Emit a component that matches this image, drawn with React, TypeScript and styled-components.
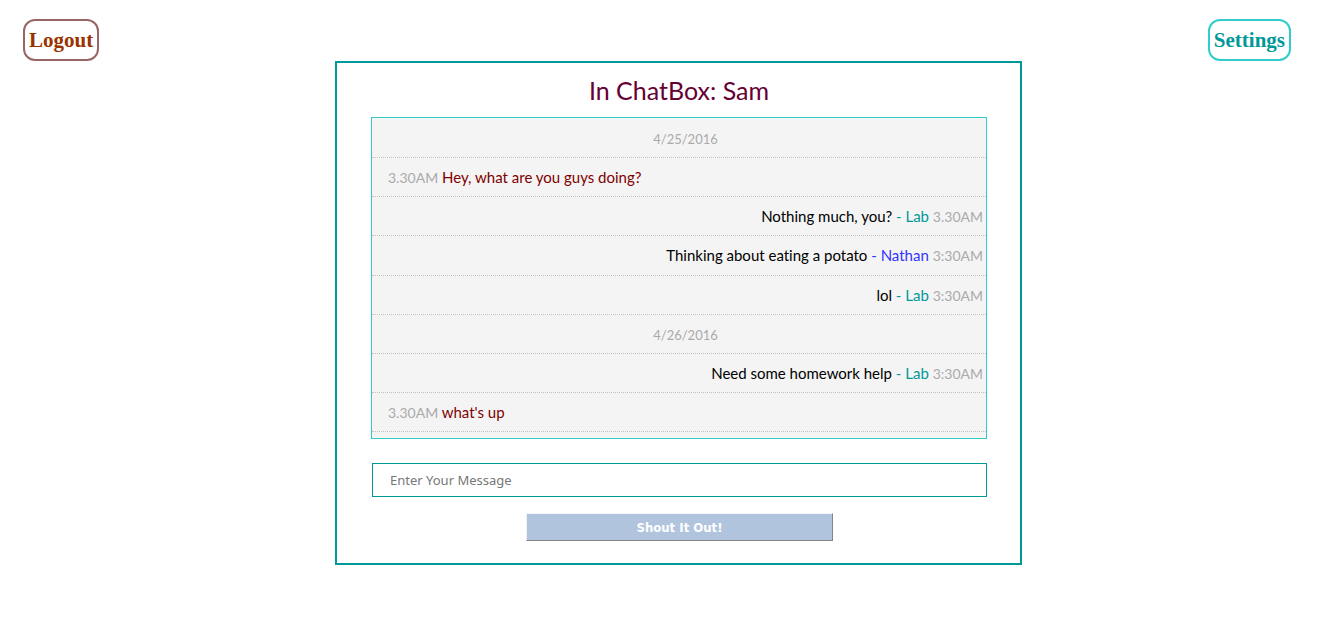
import React from "react";
import styled, { createGlobalStyle } from "styled-components";

const GlobalStyle = createGlobalStyle`
  *, *::before, *::after { box-sizing: border-box; }
  body { margin: 0; background: #fff; }
`;

const TopBar = styled.nav`
  display: flex;
  justify-content: space-between;
  padding: 19px 32px 0 23px;
`;

const PillLink = styled.a<{ $color: string; $border: string }>`
  padding: 0 4px;
  border: 2px solid ${(p) => p.$border};
  border-radius: 12px;
  color: ${(p) => p.$color};
  font: bold 21px/38px "Times New Roman", "Liberation Serif", serif;
  text-decoration: none;
`;

const Main = styled.main`
  display: flex;
  justify-content: center;
  padding-left: 34px;
`;

const Panel = styled.section`
  width: 100%;
  max-width: 687px;
  padding: 0 33px 22px 34px;
  border: 2px solid #009999;
`;

const Title = styled.h1`
  margin: 0;
  color: #660033;
  font: 400 25px/54px Papyrus, Lato, sans-serif;
  text-align: center;
`;

const MessageList = styled.ul`
  display: grid;
  grid-auto-rows: 1fr;
  min-height: 322px;
  margin: 0;
  padding: 1px 0 6px;
  border: 1px solid #33cccc;
  background: #f4f4f4;
  list-style: none;
  font: 400 15px/38px "Century Gothic", Lato, sans-serif;
  font-variant-ligatures: none;
`;

const Row = styled.li<{ $align: "left" | "center" | "right" }>`
  padding: 0 3px 0 16px;
  border-bottom: 1px dotted #c4c4c4;
  color: ${(p) => (p.$align === "left" ? "#800000" : "#000")};
  text-align: ${(p) => p.$align};
`;

const Stamp = styled.time`
  color: #aaa;
  font-size: 14px;
  line-height: 1;
`;

const DateStamp = styled(Stamp)`
  font-size: 13px;
`;

const Author = styled.span<{ $color: string }>`
  color: ${(p) => p.$color};
`;

const Form = styled.form`
  display: flex;
  flex-direction: column;
  align-items: center;
  gap: 16px;
  padding: 24px 0 0 1px;
`;

const MessageInput = styled.input`
  width: 100%;
  height: 34px;
  padding: 0 17px;
  border: 1px solid #009999;
  border-radius: 0;
  background: #fff;
  font: 13px Tahoma, "Noto Sans", sans-serif;
  &::placeholder { color: #777; opacity: 1; }
`;

const SendButton = styled.button`
  width: 50%;
  height: 28px;
  padding: 0;
  border: 1px solid;
  border-color: #f0f3f8 #858585 #858585 #f0f3f8;
  border-radius: 0;
  background: #b0c4de;
  color: #fff;
  font: bold 13px Tahoma, "DejaVu Sans Condensed", "DejaVu Sans", sans-serif;
`;

type Entry =
  | { kind: "date"; text: string }
  | { kind: "received"; time: string; text: string }
  | { kind: "sent"; time: string; text: string; author: string };

const entries: Entry[] = [
  { kind: "date", text: "4/25/2016" },
  { kind: "received", time: "3.30AM", text: "Hey, what are you guys doing?" },
  { kind: "sent", time: "3.30AM", text: "Nothing much, you?", author: "Lab" },
  { kind: "sent", time: "3:30AM", text: "Thinking about eating a potato", author: "Nathan" },
  { kind: "sent", time: "3:30AM", text: "lol", author: "Lab" },
  { kind: "date", text: "4/26/2016" },
  { kind: "sent", time: "3:30AM", text: "Need some homework help", author: "Lab" },
  { kind: "received", time: "3.30AM", text: "what's up" },
];

const authorColors: Record<string, string> = { Lab: "#009999", Nathan: "#3333ff" };

function Message({ entry }: { entry: Entry }) {
  if (entry.kind === "date") {
    return <Row $align="center"><DateStamp>{entry.text}</DateStamp></Row>;
  }
  if (entry.kind === "received") {
    return <Row $align="left"><Stamp>{entry.time}</Stamp> {entry.text}</Row>;
  }
  return (
    <Row $align="right">
      {entry.text} <Author $color={authorColors[entry.author]}>- {entry.author}</Author>{" "}
      <Stamp>{entry.time}</Stamp>
    </Row>
  );
}

export default function App() {
  return (
    <>
      <GlobalStyle />
      <TopBar>
        <PillLink href="#logout" $color="#993300" $border="#996666">Logout</PillLink>
        <PillLink href="#settings" $color="#009999" $border="#33cccc">Settings</PillLink>
      </TopBar>
      <Main>
        <Panel>
          <Title>In ChatBox: Sam</Title>
          <MessageList>
            {entries.map((entry, i) => <Message key={i} entry={entry} />)}
          </MessageList>
          <Form onSubmit={(e) => e.preventDefault()}>
            <MessageInput type="text" aria-label="Enter Your Message" placeholder="Enter Your Message" />
            <SendButton type="submit">Shout It Out!</SendButton>
          </Form>
        </Panel>
      </Main>
    </>
  );
}
